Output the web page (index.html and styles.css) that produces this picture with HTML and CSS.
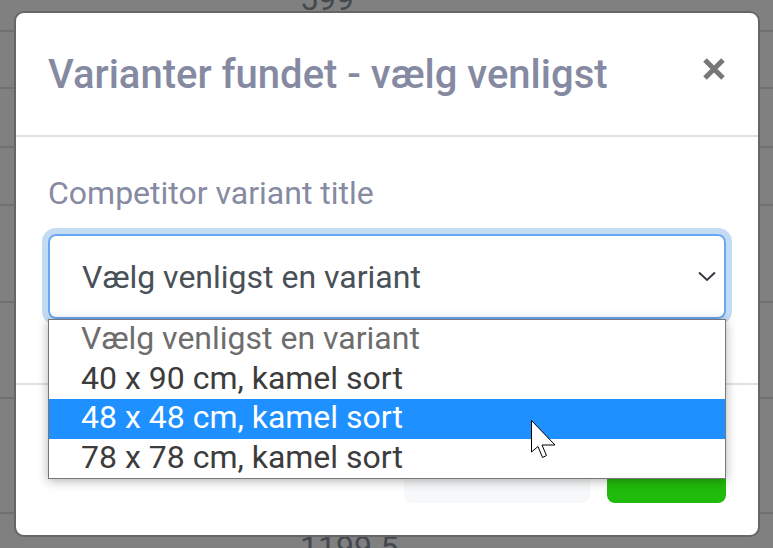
FILE: index.html
```html
<!DOCTYPE html>
<html lang="da">
<head>
<meta charset="utf-8">
<title>Varianter fundet</title>
<link rel="stylesheet" href="styles.css">
</head>
<body>
  <div class="page">
    <div class="row r1"><span class="num num-top">599</span></div>
    <div class="row r2"></div>
    <div class="row r3"></div>
    <div class="row r4"></div>
    <div class="row r5"></div>
    <div class="row r6"></div>
    <div class="row r7"></div>
    <div class="row-last"><span class="num num-bottom">1199.5</span></div>
  </div>

  <div class="modal">
    <div class="modal-header">
      <h5 class="modal-title">Varianter fundet - vælg venligst</h5>
      <span class="close" aria-label="Close">
        <svg width="22" height="22" viewBox="0 0 22 22"><path d="M2 2 L20 20 M20 2 L2 20" stroke="#777" stroke-width="5" fill="none"/></svg>
      </span>
    </div>
    <div class="modal-body">
      <label class="field-label">Competitor variant title</label>
      <div class="select-wrap">
        <div class="select">
          <span class="select-value">Vælg venligst en variant</span>
          <svg class="chevron" width="18" height="11" viewBox="0 0 18 11"><polyline points="1,1.5 9,9 17,1.5" fill="none" stroke="#343a40" stroke-width="2"/></svg>
        </div>
        <div class="dropdown">
          <div class="option disabled">Vælg venligst en variant</div>
          <div class="option">40 x 90 cm, kamel sort</div>
          <div class="option active">48 x 48 cm, kamel sort</div>
          <div class="option">78 x 78 cm, kamel sort</div>
        </div>
      </div>
    </div>
    <div class="modal-footer">
      <div class="btn btn-light"></div>
      <div class="btn btn-green"></div>
    </div>
  </div>

  <svg class="cursor" width="26" height="40" viewBox="0 0 26 40">
    <path d="M0.5 0.5 L0.5 32 L7 26.5 L11.5 37.5 L15.5 35.5 L11 25 L24 25 Z" fill="#fff" stroke="#000" stroke-width="1" stroke-linejoin="miter"/>
  </svg>
</body>
</html>
```

FILE: styles.css
```css
html, body {
  margin: 0;
  padding: 0;
}

body {
  width: 773px;
  height: 548px;
  overflow: hidden;
  position: relative;
  background: #808080;
  font-family: Roboto, "Liberation Sans", sans-serif;
}

.page {
  display: flex;
  flex-direction: column;
}

.row {
  border-bottom: 2px solid #6f7174;
}

.r1 { height: 30px; }
.r2 { height: 55px; }
.r3 { height: 57px; }
.r4 { height: 56px; }
.r5 { height: 95px; }
.r6 { height: 94px; }
.r7 { height: 113px; }

.row-last {
  height: 34px;
}

.num {
  display: block;
  font-size: 32px;
  line-height: 32px;
  color: #44484f;
  padding-left: 300px;
}

.num-top {
  margin-top: -17px;
}

.num-bottom {
  margin-top: 17px;
}

.modal {
  position: absolute;
  left: 14px;
  top: 11px;
  width: 746px;
  box-sizing: border-box;
  background: #fff;
  border: 2px solid #666;
  border-radius: 10px;
}

.modal-header {
  display: flex;
  justify-content: space-between;
  align-items: flex-start;
  padding: 32px 32px 30px;
  border-bottom: 2px solid #dee2e6;
}

.modal-title {
  margin: 0;
  font-size: 40px;
  font-weight: 500;
  line-height: 60px;
  color: #858aa2;
}

.close {
  display: block;
  margin-top: 13px;
  margin-right: 1px;
  line-height: 0;
}

.modal-body {
  padding: 32px 32px 32px;
}

.field-label {
  display: block;
  font-size: 32px;
  line-height: 48px;
  color: #868aa2;
  margin-bottom: 17px;
}

.select-wrap {
  position: relative;
  margin-bottom: 32px;
}

.select {
  height: 85px;
  box-sizing: border-box;
  display: flex;
  align-items: center;
  justify-content: space-between;
  padding: 0 8px 0 32px;
  border: 2px solid #68a7f4;
  border-radius: 8px;
  box-shadow: 0 0 0 6px #c3dcf4;
  font-size: 32px;
  color: #495057;
}

.chevron {
  display: block;
  margin-top: -1px;
}

.dropdown {
  position: absolute;
  top: 85px;
  left: 0;
  right: 0;
  background: #fff;
  border: 1px solid #777;
  box-shadow: 0 2px 10px rgba(0, 0, 0, 0.3);
  z-index: 2;
}

.option {
  height: 39.5px;
  line-height: 37px;
  padding-left: 32px;
  font-size: 32px;
  color: #3c3c3c;
}

.option.disabled {
  color: #6d6d6d;
}

.option.active {
  background: #1e90ff;
  color: #fff;
}

.modal-footer {
  display: flex;
  justify-content: flex-end;
  gap: 17px;
  padding: 32px;
  border-top: 2px solid #dee2e6;
}

.btn {
  height: 86px;
  border-radius: 8px;
}

.btn-light {
  width: 186px;
  background: #f7f8f9;
}

.btn-green {
  width: 119px;
  background: #21bb0b;
}

.cursor {
  position: absolute;
  left: 531px;
  top: 420px;
  z-index: 5;
}
```
